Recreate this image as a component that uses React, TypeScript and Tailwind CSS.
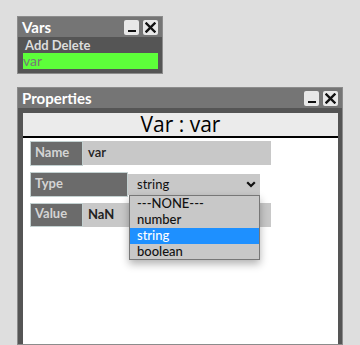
import React from "react";

function WinButtons() {
  return (
    <div className="flex items-center gap-[4px]">
      <div className="w-[15px] h-[15px] bg-[#e8e8e8] rounded-[2px] flex items-end justify-center pb-[3px]">
        <div className="w-[8px] h-[2px] bg-[#111]" />
      </div>
      <div className="w-[15px] h-[15px] bg-[#e8e8e8] rounded-[2px] flex items-center justify-center">
        <svg width="11" height="11" viewBox="0 0 11 11">
          <path d="M1.5 1.5 L9.5 9.5 M9.5 1.5 L1.5 9.5" stroke="#111" strokeWidth="2.4" strokeLinecap="square" />
        </svg>
      </div>
    </div>
  );
}

function TitleBar({ title }: { title: string }) {
  return (
    <div className="h-[20px] bg-[#757575] flex items-center justify-between pl-[4px] pr-[4px]">
      <span className="text-white font-bold text-[15px] leading-none">{title}</span>
      <WinButtons />
    </div>
  );
}

export default function App() {
  const font = { fontFamily: '"Lato", "Open Sans", sans-serif' };
  return (
    <div
      className="w-[360px] h-[345px] bg-[#dedede] overflow-hidden pl-[17px] pt-[16px] flex flex-col"
      style={font}
    >
      {/* Vars window */}
      <div className="w-[146px] border border-[#8c8c8c] bg-[#555555]">
        <TitleBar title="Vars" />
        <div className="pl-[5px] pr-[4px] pb-[4px]">
          <div className="h-[16px] flex items-center pl-[2px] text-[13px] font-bold text-[#dddddd] leading-none">
            Add Delete
          </div>
          <div className="h-[16px] bg-[#5dff3a] flex items-center text-[14px] text-[#777777] leading-none">
            var
          </div>
        </div>
      </div>

      {/* Properties window */}
      <div className="mt-[13px] w-[326px] flex-1 border border-[#8c8c8c] bg-[#555555] flex flex-col">
        <TitleBar title="Properties" />
        <div className="flex-1 pt-[5px] pl-[5px] pr-[4px] flex flex-col">
          <div className="flex-1 bg-white flex flex-col">
            <div className="h-[25px] bg-[#ebebeb] border-b-2 border-black flex items-center justify-center">
              <span
                className="text-[21px] text-black leading-none"
                style={{ fontFamily: '"Open Sans", sans-serif' }}
              >
                Var : var
              </span>
            </div>
            <div className="pl-[7px] pt-[3px] flex flex-col gap-[6px]">
              {/* Name */}
              <div className="flex items-stretch h-[25px]">
                <div className="w-[53px] bg-[#6b6b6b] border border-[#c3d1d1] flex items-center pl-[4px] pb-[2px] text-[13px] font-bold text-[#d4d4d4]">
                  Name
                </div>
                <div className="w-[188px] bg-[#c8c8c8] mb-[1px] flex items-center pl-[5px] text-[13px] font-semibold text-[#222]">
                  var
                </div>
              </div>
              {/* Type */}
              <div className="flex items-center h-[25px] relative">
                <div className="w-[98px] h-[25px] bg-[#6b6b6b] border border-[#c3d1d1] flex items-center pl-[4px] pb-[2px] text-[13px] font-bold text-[#d4d4d4]">
                  Type
                </div>
                <div className="relative w-[132px] h-[21px] bg-[#c8c8c8] flex items-center justify-between pl-[9px] pr-[4px] text-[13px] text-[#111]">
                  <span>string</span>
                  <svg width="10" height="7" viewBox="0 0 10 7">
                    <path d="M1.2 1.2 L5 5 L8.8 1.2" stroke="#111" strokeWidth="2.2" fill="none" />
                  </svg>
                  <div className="absolute left-[1px] top-[21px] w-[131px] bg-[#c8c8c8] border border-[#777] shadow-[0_4px_8px_rgba(0,0,0,0.3)] z-10 text-[13px] font-medium text-[#111]">
                    <div className="h-[16px] flex items-center pl-[7px]">---NONE---</div>
                    <div className="h-[16px] flex items-center pl-[7px]">number</div>
                    <div className="h-[16px] flex items-center pl-[7px] bg-[#1e90ff] text-white">string</div>
                    <div className="h-[15px] flex items-center pl-[7px]">boolean</div>
                  </div>
                </div>
              </div>
              {/* Value */}
              <div className="flex items-stretch h-[24px]">
                <div className="w-[53px] bg-[#6b6b6b] border border-[#c3d1d1] flex items-center pl-[4px] pb-[2px] text-[13px] font-bold text-[#d4d4d4]">
                  Value
                </div>
                <div className="w-[188px] bg-[#c8c8c8] flex items-center pl-[5px] text-[13px] font-bold text-[#222]">
                  NaN
                </div>
              </div>
            </div>
          </div>
        </div>
      </div>
    </div>
  );
}
